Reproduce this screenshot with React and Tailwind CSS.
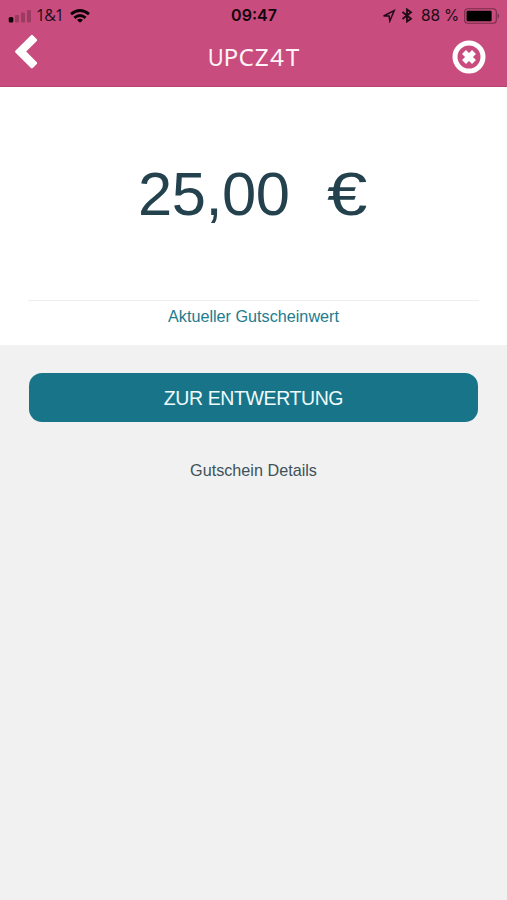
import React from "react";

const CODE = ["U", "P", "C", "Z", "4", "T"];

function StatusBar() {
  return (
    <div className="grid h-[30px] grid-cols-[1fr_auto_1fr] items-center pl-2 pr-[7px] pt-px font-[Inter,sans-serif] text-[15.5px] leading-[29px] text-[#210b16]">
      <div className="flex items-center">
        <svg className="h-[14px] w-[24px]" viewBox="0 0 24 14">
          <rect x="0.7" y="8" width="4.6" height="5.5" rx="1.5" fill="#0b0206" />
          <g fill="#9b3b62">
            <rect x="7" y="6" width="4" height="7.5" rx="1" />
            <rect x="13" y="3.5" width="4" height="10" rx="1" />
            <rect x="19" y="1" width="4" height="12.5" rx="1" />
          </g>
        </svg>
        <span className="ml-1 w-[26px] whitespace-nowrap font-['Open_Sans',sans-serif] text-[16px] tracking-[-0.9px]">1&amp;1</span>
        <svg className="ml-2 h-[14px] w-5" viewBox="0 0 20 14" fill="none" stroke="#0b0206" strokeWidth="2.8">
          <path d="M1 5.2Q10 -2.2 19 5.2" />
          <path d="M4.4 8.8Q10 4.2 15.6 8.8" />
          <path d="M7 11Q10 8.6 13 11L10 13.8Z" fill="#0b0206" stroke="none" />
        </svg>
      </div>
      <span className="text-[16px] font-semibold text-[#12040b]">09:47</span>
      <div className="flex items-center justify-end">
        <svg className="h-[14px] w-[14px]" viewBox="0 0 14 14" fill="none" stroke="#210b16" strokeWidth="1.5">
          <path d="M1.6 7L12.2 1.6L7.8 12L7.1 7.1Z" />
        </svg>
        <svg className="ml-[5px] h-[15px] w-[12px]" viewBox="0 0 12 15" fill="none" stroke="#210b16" strokeWidth="1.8">
          <path d="M1.5 4L10 10.8L6 13.6V1.4L10 4.2L1.5 11" />
        </svg>
        <span className="ml-[8px] w-[40px] whitespace-nowrap tracking-[-0.15px]">88 %</span>
        <svg className="ml-[3px] h-4 w-[36px]" viewBox="0 0 36 16">
          <rect x="0.7" y="0.7" width="31.6" height="14.6" rx="3.3" fill="none" stroke="#762c4a" strokeWidth="1.1" />
          <rect x="2.6" y="2.8" width="25" height="10.4" rx="1.2" fill="#000" />
          <path d="M33.7 5.3Q36.5 8 33.7 10.7Z" fill="#762c4a" />
        </svg>
      </div>
    </div>
  );
}

function Header() {
  return (
    <header className="h-[87px] border-b border-[#b94370] bg-[#c84c7d]">
      <StatusBar />
      <div className="grid h-[54px] grid-cols-[1fr_auto_1fr] items-center pl-[14px] pr-[21px]">
        <button className="-mt-2.5 h-[36px] w-6" aria-label="Zurück">
          <svg className="h-full w-full" viewBox="0 0 24 36" fill="#fff">
            <path d="M17 1.2Q17.9 0.4 18.8 1.2L22.8 5.2Q23.6 6.1 22.8 7L12.2 17.6L22.8 28.2Q23.6 29.1 22.8 30L18.8 34Q17.9 34.8 17 34L1.4 18.5Q0.6 17.6 1.4 16.7Z" />
          </svg>
        </button>
        <h1 className="ml-[8px] flex font-['Noto_Sans',sans-serif] text-[24.4px] leading-[54px] text-[#fff3f8]">
          {CODE.map((char, i) => (
            <span key={i} className="flex w-[15.4px] justify-center first:scale-x-90">
              {char}
            </span>
          ))}
        </h1>
        <button className="h-[34px] w-[34px] justify-self-end" aria-label="Schließen">
          <svg className="h-full w-full" viewBox="0 0 34 34" fill="none" stroke="#fff">
            <circle cx="17" cy="17" r="14" strokeWidth="5" />
            <path d="M12 12L22 22M22 12L12 22" strokeWidth="5.6" />
          </svg>
        </button>
      </div>
    </header>
  );
}

export default function App() {
  return (
    <div className="flex h-[900px] w-[507px] flex-col overflow-hidden bg-[#f1f1f1] font-['Liberation_Sans',Arial,sans-serif]">
      <Header />
      <section className="h-[258px] bg-white px-7">
        <div className="flex h-[214px] items-center border-b border-[#eeeeee] pl-[110px] text-[61.5px] leading-none text-[#24424e]">
          <span className="w-[189px] whitespace-nowrap tracking-[-0.5px]">25,00</span>
          <span className="inline-block origin-left scale-x-[1.18]">€</span>
        </div>
        <p className="pt-[3px] text-center text-[16.2px] leading-6 text-[#237b8d]">Aktueller Gutscheinwert</p>
      </section>
      <main className="px-[29px] pt-7">
        <button className="block h-[49px] w-full rounded-[13px] bg-[#187589] pt-px text-center text-[19.5px] leading-[48px] tracking-[-0.4px] text-[#eefafc]">
          ZUR ENTWERTUNG
        </button>
        <p className="mt-9 text-center text-[16.2px] leading-6 text-[#405159]">Gutschein Details</p>
      </main>
    </div>
  );
}
